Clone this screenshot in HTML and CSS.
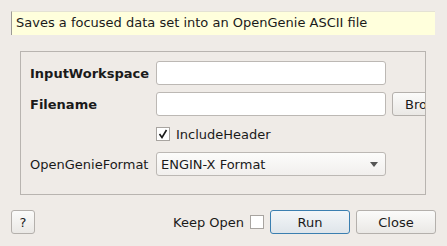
FILE: index.html
```html
<!DOCTYPE html>
<html lang="en">
<head>
    <meta charset="UTF-8">
    <title>SaveOpenGenieAscii</title>
    <link rel="stylesheet" href="styles.css">
</head>
<body>
    <div class="dialog">
        <div class="description">Saves a focused data set into an OpenGenie ASCII file</div>

        <div class="group">
            <div class="row">
                <label class="label bold">InputWorkspace</label>
                <input class="field" type="text">
            </div>
            <div class="row">
                <label class="label bold">Filename</label>
                <input class="field" type="text">
                <button class="btn browse">Browse</button>
            </div>
            <div class="row check-row">
                <span class="label"></span>
                <span class="checkbox checked">
                    <svg width="10" height="10" viewBox="0 0 10 10"><path d="M1.5 5 L4 8.5 L8.5 1" fill="none" stroke="#1a1a1a" stroke-width="1.6"/></svg>
                </span>
                <span class="check-text">IncludeHeader</span>
            </div>
            <div class="row">
                <label class="label">OpenGenieFormat</label>
                <div class="field combo">
                    <span>ENGIN-X Format</span>
                    <span class="arrow"></span>
                </div>
            </div>
        </div>

        <div class="footer">
            <button class="btn help">?</button>
            <div class="spacer"></div>
            <span class="keep-text">Keep Open</span>
            <span class="checkbox"></span>
            <button class="btn run">Run</button>
            <button class="btn">Close</button>
        </div>
    </div>
</body>
</html>
```

FILE: styles.css
```css
/* General */
body {
    margin: 0;
    background: #efebe7;
    font-family: 'DejaVu Sans', sans-serif;
    font-size: 13px;
    color: #1a1a1a;
}

.dialog {
    width: 447px;
    height: 246px;
    padding-top: 11px;
    box-sizing: border-box;
}

/* Description */
.description {
    margin: 0 12px 0 11px;
    height: 24px;
    box-sizing: border-box;
    background: #ffffdc;
    border-left: 1px solid #9c9a96;
    border-top: 1px solid #e4e2d4;
    padding-left: 4px;
    line-height: 22px;
}

/* Property group */
.group {
    margin: 16px 21px 0 20px;
    height: 144px;
    box-sizing: border-box;
    border: 1px solid #b8b4b0;
    padding: 9px 0 0 9px;
    overflow: hidden;
    display: flex;
    flex-direction: column;
    gap: 7px;
}

.row {
    display: flex;
    align-items: center;
    height: 24px;
    white-space: nowrap;
}

.check-row {
    height: 22px;
}

.label {
    width: 126px;
    flex-shrink: 0;
}

.bold {
    font-weight: bold;
}

.field {
    width: 230px;
    height: 24px;
    box-sizing: border-box;
    flex-shrink: 0;
    border: 1px solid #bcb8b4;
    border-radius: 3px;
    background: #ffffff;
    font-family: inherit;
    font-size: 13px;
    margin: 0;
    padding: 0 4px;
}

.combo {
    display: flex;
    align-items: center;
    justify-content: space-between;
    background: linear-gradient(#fcfcfb, #f1efed);
    padding: 0 7px 0 4px;
}

.arrow {
    width: 0;
    height: 0;
    border-left: 4px solid transparent;
    border-right: 4px solid transparent;
    border-top: 5px solid #555555;
}

/* Checkboxes */
.checkbox {
    width: 12px;
    height: 12px;
    flex-shrink: 0;
    border: 1px solid #a8a4a0;
    background: #ffffff;
    display: flex;
    align-items: center;
    justify-content: center;
}

.check-text {
    margin-left: 6px;
}

/* Buttons */
.btn {
    height: 24px;
    width: 80px;
    flex-shrink: 0;
    box-sizing: border-box;
    border: 1px solid #b4b0ac;
    border-radius: 3px;
    background: linear-gradient(#fbfbfa, #eae8e5);
    font-family: inherit;
    font-size: 13px;
    color: #1a1a1a;
    padding: 0;
    margin: 0;
}

.browse {
    margin-left: 6px;
    text-align: left;
    padding-left: 12px;
}

.footer {
    display: flex;
    align-items: center;
    margin: 15px 11px 0 11px;
    gap: 6px;
}

.help {
    width: 24px;
}

.spacer {
    flex: 1;
}

.run {
    border-color: #3b7fb0;
    background: linear-gradient(#f3f6f8, #dfe5ea);
}
```
